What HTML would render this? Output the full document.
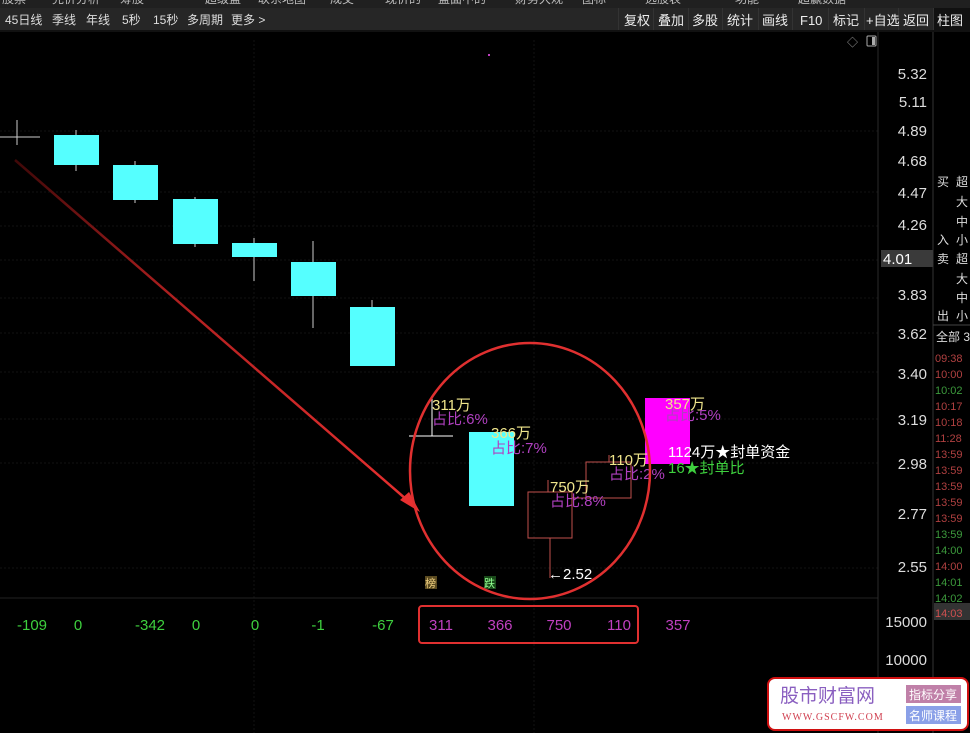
<!DOCTYPE html>
<html><head><meta charset="utf-8"><style>
body{margin:0;background:#000;width:970px;height:733px;overflow:hidden;font-family:"Liberation Sans","Noto Sans CJK SC",sans-serif;}
svg{position:absolute;left:0;top:0}
</style></head><body>
<svg width="970" height="733" viewBox="0 0 970 733" font-family="Liberation Sans, Noto Sans CJK SC, sans-serif">
<defs><linearGradient id="ar" x1="15" y1="160" x2="414" y2="506" gradientUnits="userSpaceOnUse"><stop offset="0" stop-color="#400808"/><stop offset="0.4" stop-color="#b02020"/><stop offset="1" stop-color="#e83030"/></linearGradient></defs>
<rect width="970" height="733" fill="#000"/>
<!-- top bars -->
<rect x="0" y="0" width="970" height="8" fill="#202020"/>
<g font-size="12" fill="#bbb"><text x="2" y="3">股票</text><text x="52" y="3">完价分析</text><text x="120" y="3">筹股</text><text x="205" y="3">超级盘</text><text x="258" y="3">联系地图</text><text x="330" y="3">成交</text><text x="385" y="3">现价的</text><text x="438" y="3">盘面中的</text><text x="515" y="3">财务大观</text><text x="582" y="3">图标</text><text x="645" y="3">选股表</text><text x="735" y="3">功能</text><text x="798" y="3">超赢数据</text></g>
<rect x="0" y="8" width="970" height="22" fill="#262626"/>
<rect x="0" y="30" width="970" height="2" fill="#111"/>
<g font-size="12" fill="#ddd">
<text x="5" y="24">45日线</text><text x="52" y="24">季线</text><text x="86" y="24">年线</text><text x="122" y="24">5秒</text><text x="153" y="24">15秒</text><text x="187" y="24">多周期</text><text x="231" y="24">更多 &gt;</text>
</g>
<g fill="#333"><rect x="618" y="8" width="1" height="22"/><rect x="653" y="8" width="1" height="22"/><rect x="688" y="8" width="1" height="22"/><rect x="722" y="8" width="1" height="22"/><rect x="758" y="8" width="1" height="22"/><rect x="792" y="8" width="1" height="22"/><rect x="828" y="8" width="1" height="22"/><rect x="864" y="8" width="1" height="22"/><rect x="898" y="8" width="1" height="22"/><rect x="933" y="8" width="1" height="22"/></g>
<rect x="934" y="8" width="36" height="22" fill="#111"/>
<g font-size="13" fill="#eee">
<text x="624" y="25">复权</text><text x="658" y="25">叠加</text><text x="692" y="25">多股</text><text x="727" y="25">统计</text><text x="762" y="25">画线</text><text x="800" y="25">F10</text><text x="833" y="25">标记</text><text x="866" y="25">+自选</text><text x="903" y="25">返回</text><text x="937" y="25">柱图</text>
</g>
<text x="847" y="46" font-size="11" fill="#999">◇</text>
<rect x="867" y="36" width="9" height="10" rx="1" fill="none" stroke="#aaa"/><rect x="872" y="37" width="3" height="8" fill="#aaa"/>
<rect x="488" y="54" width="2" height="2" fill="#c040c0"/>
<!-- grid -->
<g stroke="#121212" stroke-dasharray="2,2">
<line x1="0" y1="131" x2="878" y2="131"/><line x1="0" y1="192" x2="878" y2="192"/><line x1="0" y1="226" x2="878" y2="226"/><line x1="0" y1="260" x2="878" y2="260"/><line x1="0" y1="298" x2="878" y2="298"/><line x1="0" y1="333" x2="878" y2="333"/><line x1="0" y1="372" x2="878" y2="372"/><line x1="0" y1="419" x2="878" y2="419"/><line x1="0" y1="463" x2="878" y2="463"/><line x1="0" y1="568" x2="878" y2="568"/>
<line x1="254" y1="40" x2="254" y2="733"/><line x1="534" y1="40" x2="534" y2="733"/>
</g>
<line x1="0" y1="598" x2="878" y2="598" stroke="#222"/>
<line x1="878" y1="32" x2="878" y2="733" stroke="#2a2a2a"/>
<line x1="933" y1="32" x2="933" y2="733" stroke="#333"/>
<!-- axis -->
<g font-size="15" fill="#ddd" text-anchor="end">
<text x="927" y="79">5.32</text><text x="927" y="107">5.11</text><text x="927" y="136">4.89</text><text x="927" y="166">4.68</text><text x="927" y="198">4.47</text><text x="927" y="230">4.26</text><text x="927" y="300">3.83</text><text x="927" y="339">3.62</text><text x="927" y="379">3.40</text><text x="927" y="425">3.19</text><text x="927" y="469">2.98</text><text x="927" y="519">2.77</text><text x="927" y="572">2.55</text><text x="927" y="627">15000</text><text x="927" y="665">10000</text>
</g>
<rect x="881" y="250" width="52" height="17" fill="#3a3a3a"/><text x="883" y="264" font-size="15" fill="#fff">4.01</text>
<!-- right panel -->
<g font-size="12" fill="#ddd">
<text x="937" y="186">买</text><text x="956" y="186">超</text><text x="956" y="206">大</text><text x="956" y="226">中</text><text x="937" y="244">入</text><text x="956" y="244">小</text>
<text x="937" y="263">卖</text><text x="956" y="263">超</text><text x="956" y="283">大</text><text x="956" y="302">中</text><text x="937" y="320">出</text><text x="956" y="320">小</text>
<text x="936" y="341">全部 3</text>
</g>
<line x1="933" y1="325" x2="970" y2="325" stroke="#444"/>
<rect x="934" y="603" width="36" height="17" fill="#333"/>
<g font-size="11">
<text x="935" y="362" fill="#b04040">09:38</text><text x="935" y="378" fill="#b04040">10:00</text><text x="935" y="394" fill="#3c9a3c">10:02</text><text x="935" y="410" fill="#b04040">10:17</text><text x="935" y="426" fill="#b04040">10:18</text><text x="935" y="442" fill="#b04040">11:28</text><text x="935" y="458" fill="#b04040">13:59</text><text x="935" y="474" fill="#b04040">13:59</text><text x="935" y="490" fill="#b04040">13:59</text><text x="935" y="506" fill="#b04040">13:59</text><text x="935" y="522" fill="#b04040">13:59</text><text x="935" y="538" fill="#3c9a3c">13:59</text><text x="935" y="554" fill="#3c9a3c">14:00</text><text x="935" y="570" fill="#b04040">14:00</text><text x="935" y="586" fill="#3c9a3c">14:01</text><text x="935" y="602" fill="#3c9a3c">14:02</text><text x="935" y="617" fill="#d05050">14:03</text>
</g>
<!-- candles -->
<g stroke="#ccc"><line x1="0" y1="137" x2="40" y2="137"/><line x1="17" y1="120" x2="17" y2="145"/></g>
<g fill="#55ffff" stroke="#ccc">
<line x1="76" y1="130" x2="76" y2="171"/><line x1="135" y1="161" x2="135" y2="203"/><line x1="195" y1="197" x2="195" y2="247"/><line x1="254" y1="238" x2="254" y2="281"/><line x1="313" y1="241" x2="313" y2="328"/><line x1="372" y1="300" x2="372" y2="310"/>
</g>
<g fill="#55ffff">
<rect x="54" y="135" width="45" height="30"/><rect x="113" y="165" width="45" height="35"/><rect x="173" y="199" width="45" height="45"/><rect x="232" y="243" width="45" height="14"/><rect x="291" y="262" width="45" height="34"/><rect x="350" y="307" width="45" height="59"/><rect x="469" y="432" width="45" height="74"/>
</g>
<g stroke="#fff"><line x1="409" y1="436" x2="453" y2="436"/><line x1="432" y1="398" x2="432" y2="436"/></g>
<g stroke="#c0504d" fill="none">
<rect x="528" y="492" width="44" height="46"/><line x1="550" y1="538" x2="550" y2="578"/>
<polyline points="572,498 586,498 586,462 631,462 631,498 586,498"/>
<line x1="548" y1="480" x2="548" y2="492"/><line x1="609" y1="455" x2="609" y2="462"/>
</g>
<rect x="645" y="398" width="45" height="66" fill="#ff00ff"/>
<!-- labels -->
<g font-size="15">
<text x="432" y="410" fill="#f0e68c">311万</text><text x="432" y="424" fill="#b040c0">占比:6%</text>
<text x="491" y="438" fill="#f0e68c">366万</text><text x="491" y="453" fill="#b040c0">占比:7%</text>
<text x="550" y="492" fill="#f0e68c">750万</text><text x="550" y="506" fill="#b040c0">占比:8%</text>
<text x="609" y="465" fill="#f0e68c">110万</text><text x="609" y="479" fill="#b040c0">占比:2%</text>
<text x="665" y="409" fill="#f0e68c">357万</text><text x="665" y="420" fill="#b040c0">占比:5%</text>
<text x="668" y="457" fill="#fff">1124万★封单资金</text>
<text x="668" y="473" fill="#3ed03e">16★封单比</text>
<text x="548" y="579" fill="#fff">←2.52</text>
</g>
<rect x="425" y="576" width="12" height="13" fill="#5a4a20"/><text x="425" y="587" font-size="11" fill="#f0d080">榜</text>
<rect x="484" y="576" width="12" height="13" fill="#1a4a1a"/><text x="484" y="587" font-size="11" fill="#90ff90">跌</text>
<!-- arrow & circle -->
<line x1="15" y1="160" x2="414" y2="506" stroke="url(#ar)" stroke-width="2.5"/>
<polygon points="420,512 400,500 409,492" fill="#e83030"/>
<ellipse cx="530" cy="471" rx="120" ry="128" fill="none" stroke="#e03030" stroke-width="2.5"/>
<!-- volume -->
<g font-size="15" text-anchor="middle">
<g fill="#3ed03e"><text x="32" y="630">-109</text><text x="78" y="630">0</text><text x="150" y="630">-342</text><text x="196" y="630">0</text><text x="255" y="630">0</text><text x="318" y="630">-1</text><text x="383" y="630">-67</text></g>
<g fill="#c040c0"><text x="441" y="630">311</text><text x="500" y="630">366</text><text x="559" y="630">750</text><text x="619" y="630">110</text><text x="678" y="630">357</text></g>
</g>
<rect x="419" y="606" width="219" height="37" rx="3" fill="none" stroke="#e03030" stroke-width="2"/>
<!-- logo -->
<rect x="768" y="678" width="200" height="52" rx="7" fill="#fff" stroke="#d01010" stroke-width="2"/>
<text x="780" y="702" font-size="19" fill="#8a5fc0">股市财富网</text>
<text x="782" y="720" font-size="10" fill="#d04050" font-family="Liberation Serif, serif" letter-spacing="1">WWW.GSCFW.COM</text>
<rect x="906" y="685" width="55" height="18" fill="#c080a8"/><text x="909" y="699" font-size="12" fill="#fff">指标分享</text>
<rect x="906" y="706" width="55" height="18" fill="#8aa0e8"/><text x="909" y="720" font-size="12" fill="#fff">名师课程</text>
</svg>
</body></html>
